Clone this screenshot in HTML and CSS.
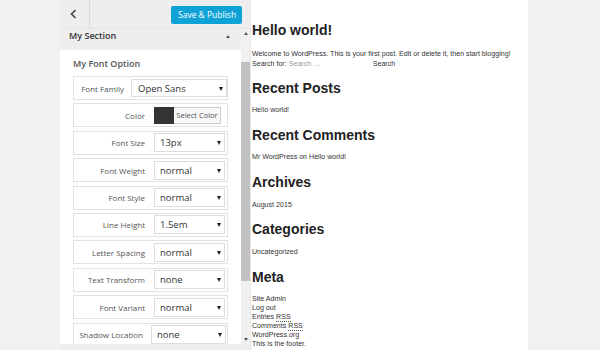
FILE: index.html
```html
<!DOCTYPE html>
<html lang="en">
<head>
    <meta charset="UTF-8">
    <title>Customize: Font Options</title>
    <link rel="stylesheet" href="styles.css">
</head>
<body>
    <div class="screen">
        <div class="gutter"></div>

        <div class="panel">
            <div class="panel-header">
                <div class="back">
                    <svg width="7" height="10" viewBox="0 0 7 10"><path d="M5.5 1 L1.5 5 L5.5 9" fill="none" stroke="#444" stroke-width="1.6"/></svg>
                </div>
                <div class="publish">Save &amp; Publish</div>
            </div>

            <div class="panel-body">
                <div class="panel-content">
                    <div class="section-title">
                        <span>My Section</span>
                        <span class="caret"></span>
                    </div>

                    <div class="options">
                        <h3>My Font Option</h3>

                        <div class="opt-row family">
                            <label>Font Family</label>
                            <div class="select">Open Sans</div>
                        </div>
                        <div class="opt-row">
                            <label>Color</label>
                            <div class="color-pick">
                                <span class="swatch"></span>
                                <span class="pick-btn">Select Color</span>
                            </div>
                        </div>
                        <div class="opt-row">
                            <label>Font Size</label>
                            <div class="select">13px</div>
                        </div>
                        <div class="opt-row">
                            <label>Font Weight</label>
                            <div class="select">normal</div>
                        </div>
                        <div class="opt-row">
                            <label>Font Style</label>
                            <div class="select">normal</div>
                        </div>
                        <div class="opt-row">
                            <label>Line Height</label>
                            <div class="select">1.5em</div>
                        </div>
                        <div class="opt-row">
                            <label>Letter Spacing</label>
                            <div class="select">normal</div>
                        </div>
                        <div class="opt-row">
                            <label>Text Transform</label>
                            <div class="select">none</div>
                        </div>
                        <div class="opt-row">
                            <label>Font Variant</label>
                            <div class="select">normal</div>
                        </div>
                        <div class="opt-row shadow">
                            <label>Shadow Location</label>
                            <div class="select">none</div>
                        </div>
                    </div>
                </div>

                <div class="scrollbar">
                    <span class="arrow up"></span>
                    <div class="track"><div class="thumb"></div></div>
                    <span class="arrow down"></span>
                </div>
            </div>

            <div class="panel-footer"></div>
        </div>

        <div class="preview">
            <h1>Hello world!</h1>
            <p class="post">Welcome to WordPress. This is your first post. Edit or delete it, then start blogging!</p>
            <div class="search">
                <span>Search for:</span>
                <span class="search-input">Search …</span>
                <span>Search</span>
            </div>

            <h2>Recent Posts</h2>
            <ul><li>Hello world!</li></ul>

            <h2>Recent Comments</h2>
            <ul><li>Mr WordPress on Hello world!</li></ul>

            <h2>Archives</h2>
            <ul><li>August 2015</li></ul>

            <h2>Categories</h2>
            <ul><li>Uncategorized</li></ul>

            <h2>Meta</h2>
            <ul>
                <li>Site Admin</li>
                <li>Log out</li>
                <li>Entries <abbr>RSS</abbr></li>
                <li>Comments <abbr>RSS</abbr></li>
                <li>WordPress.org</li>
            </ul>
            <p class="footer">This is the footer.</p>
        </div>

        <div class="gutter-right"></div>
    </div>
</body>
</html>
```

FILE: styles.css
```css
body {
    margin: 0;
    background: #f1f1f1;
    font-family: 'Open Sans', sans-serif;
    overflow: hidden;
}

.screen {
    display: flex;
    height: 350px;
    width: 600px;
    overflow: hidden;
}

.gutter {
    flex: 0 0 60px;
    background: #f1f1f1;
}

.gutter-right {
    flex: 1;
    background: #f1f1f1;
}

/* customizer panel */

.panel {
    flex: 0 0 190px;
    min-width: 0;
    display: flex;
    flex-direction: column;
    background: #eeeeee;
}

.panel-header {
    height: 29px;
    flex: 0 0 29px;
    display: flex;
    align-items: center;
    justify-content: space-between;
    box-sizing: border-box;
    border-bottom: 1px solid #e4e4e4;
}

.back {
    width: 30px;
    height: 29px;
    display: flex;
    align-items: center;
    justify-content: center;
    border-right: 1px solid #dcdcdc;
    box-sizing: border-box;
    padding-right: 3px;
}

.publish {
    margin-right: 8px;
    margin-top: 1px;
    background: #0ea2d6;
    color: white;
    font-size: 8.5px;
    line-height: 18px;
    padding: 0 7px;
    border-radius: 2px;
    width: 71px;
    box-sizing: border-box;
    text-align: center;
    white-space: nowrap;
}

.panel-body {
    flex: 1;
    display: flex;
    min-height: 0;
}

.panel-content {
    flex: 1;
    min-width: 0;
    overflow: hidden;
    background: white;
}

.section-title {
    height: 21px;
    box-sizing: border-box;
    display: flex;
    align-items: flex-start;
    justify-content: space-between;
    padding: 1px 11px 0 9px;
    line-height: 12px;
    background: #eeeeee;
    font-size: 9px;
    font-weight: 600;
    color: #333;
}

.caret {
    width: 0;
    height: 0;
    margin-top: 5px;
    border-left: 2px solid transparent;
    border-right: 2px solid transparent;
    border-bottom: 3px solid #555;
}

.options {
    padding: 7px 0 0 13px;
}

.options h3 {
    margin: 0 0 5px 0;
    font-size: 9px;
    line-height: 14px;
    font-weight: 600;
    color: #555;
}

.opt-row {
    width: 155px;
    height: 24px;
    box-sizing: border-box;
    border: 1px solid #e2e2e2;
    display: flex;
    align-items: center;
    padding: 0 0 0 4px;
    margin-bottom: 3.4px;
}

.opt-row label {
    flex: 0 0 67px;
    text-align: right;
    font-size: 8px;
    color: #555;
    margin-right: 9px;
    white-space: nowrap;
}

.select {
    position: relative;
    flex: 0 0 71px;
    height: 19px;
    box-sizing: border-box;
    border: 1px solid #dddddd;
    background: white;
    font-size: 9.5px;
    line-height: 17px;
    color: #333;
    padding-left: 5px;
}

.select::after {
    content: "";
    position: absolute;
    right: 3px;
    top: 7px;
    border-left: 2px solid transparent;
    border-right: 2px solid transparent;
    border-top: 4px solid #222;
}

.family label {
    flex-basis: 46px;
    margin-right: 7px;
}

.family .select {
    flex-basis: 96px;
    height: 18px;
    padding-left: 6px;
}

.shadow label {
    flex-basis: 65px;
    margin-right: 8px;
}

.shadow .select {
    flex-basis: 75px;
}

.color-pick {
    display: flex;
    height: 17px;
}

.swatch {
    width: 20px;
    background: #333333;
}

.pick-btn {
    width: 47px;
    box-sizing: border-box;
    border: 1px solid #cccccc;
    border-left: none;
    background: #f7f7f7;
    font-size: 7.5px;
    line-height: 15px;
    color: #555;
    text-align: center;
    white-space: nowrap;
}

.scrollbar {
    flex: 0 0 9px;
    display: flex;
    flex-direction: column;
    align-items: center;
    background: #f1f1f1;
}

.arrow {
    width: 0;
    height: 0;
    border-left: 2px solid transparent;
    border-right: 2px solid transparent;
}

.arrow.up {
    margin: 3px 0 0 0;
    border-bottom: 3px solid #555;
}

.arrow.down {
    margin: 0 0 3px 0;
    border-top: 3px solid #555;
}

.track {
    flex: 1;
    width: 100%;
    padding-top: 27px;
    box-sizing: border-box;
}

.thumb {
    height: 219px;
    background: #c1c1c1;
}

.panel-footer {
    flex: 0 0 6px;
    background: #eeeeee;
}

/* site preview */

.preview {
    flex: 0 0 276px;
    min-width: 0;
    background: white;
    padding-left: 1px;
    font-family: 'Liberation Sans', Arial, sans-serif;
    font-size: 7.1px;
    color: #333;
    border-left: 1px solid #e8e8e8;
}

.preview h1,
.preview h2 {
    margin: 0;
    font-size: 14px;
    line-height: 16px;
    font-weight: bold;
    color: #222;
}

.preview h1 {
    margin-top: 22px;
    margin-bottom: 10.5px;
}

.preview h2 {
    margin-bottom: 10.5px;
}

.post {
    margin: 0;
    line-height: 10px;
    white-space: nowrap;
}

.search {
    display: flex;
    line-height: 10px;
    margin-bottom: 11px;
}

.search-input {
    width: 84px;
    color: #999;
    padding-left: 2px;
}

.preview ul {
    list-style: none;
    margin: 0 0 11.75px 0;
    padding: 0;
    line-height: 9px;
}

.preview abbr {
    text-decoration: none;
    border-bottom: 1px dotted #555;
}

.footer {
    margin: -11.75px 0 0 0;
    line-height: 9px;
}
```
